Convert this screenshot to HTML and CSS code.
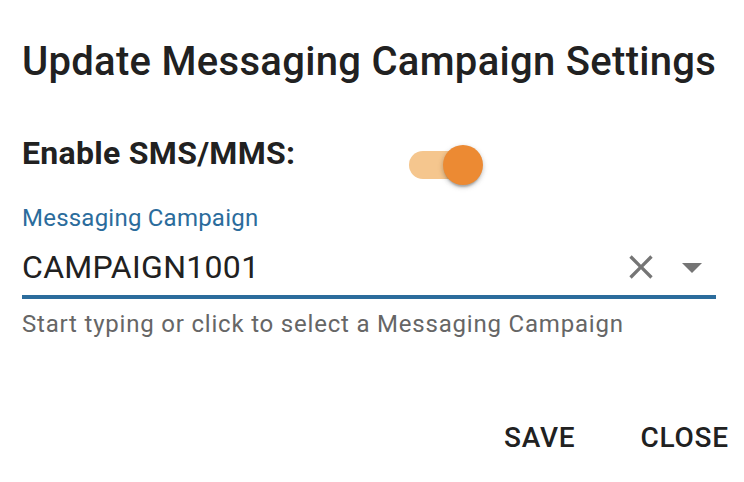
FILE: index.html
```html
<!DOCTYPE html>
<html lang="en">
<head>
<meta charset="UTF-8">
<title>Update Messaging Campaign Settings</title>
<link rel="stylesheet" href="styles.css">
</head>
<body>
<div class="dialog">
  <h2 class="dialog-title">Update Messaging Campaign Settings</h2>
  <div class="dialog-content">
    <div class="toggle-row">
      <span class="toggle-label">Enable SMS/MMS:</span>
      <span class="switch">
        <span class="switch-track"></span>
        <span class="switch-thumb"></span>
      </span>
    </div>
    <div class="field">
      <label class="field-label">Messaging Campaign</label>
      <div class="field-input">
        <span class="field-value">CAMPAIGN1001</span>
        <svg class="icon-clear" viewBox="0 0 24 24" width="40" height="40"><path d="M19 6.41 17.59 5 12 10.59 6.41 5 5 6.41 10.59 12 5 17.59 6.41 19 12 13.41 17.59 19 19 17.59 13.41 12z" fill="#757575"/></svg>
        <svg class="icon-arrow" viewBox="0 0 24 24" width="48" height="48"><path d="M7 10l5 5 5-5z" fill="#757575"/></svg>
      </div>
      <div class="field-helper">Start typing or click to select a Messaging Campaign</div>
    </div>
  </div>
  <div class="dialog-actions">
    <button class="btn">SAVE</button>
    <button class="btn">CLOSE</button>
  </div>
</div>
</body>
</html>
```
FILE: styles.css
```css
body { margin: 0; background: #fff; font-family: Roboto, "Liberation Sans", sans-serif; color: #212121; }
.dialog { width: 744px; height: 482px; display: flex; flex-direction: column; }
.dialog-title { margin: 0; padding: 30px 22px 0; font-size: 40px; font-weight: 500; line-height: 64px; letter-spacing: 0.0075em; }
.dialog-content { padding: 0 28px 0 22px; }
.toggle-row { display: flex; align-items: flex-start; margin-top: 39px; }
.toggle-label { width: 387px; font-size: 32px; font-weight: 700; line-height: 40px; letter-spacing: 0.00938em; }
.switch { position: relative; width: 74px; height: 40px; margin-top: 12px; }
.switch-track { position: absolute; left: 0; top: 6px; width: 68px; height: 28px; border-radius: 14px; background: #f5c68e; }
.switch-thumb { position: absolute; left: 34px; top: 0; width: 40px; height: 40px; border-radius: 50%; background: #ec8a33; box-shadow: 0 4px 2px -2px rgba(0,0,0,0.2), 0 2px 4px rgba(0,0,0,0.14), 0 2px 6px rgba(0,0,0,0.12); }
.field { margin-top: 19px; }
.field-label { display: block; font-size: 24px; color: #2b6c9c; line-height: 28px; letter-spacing: 0.00938em; }
.field-input { display: flex; align-items: center; height: 48px; margin-top: 11px; padding-bottom: 4px; border-bottom: 4px solid #2b6c9c; }
.field-value { flex: 1; font-size: 32px; line-height: 48px; letter-spacing: 0.00938em; }
.icon-clear { margin-right: 7px; }
.field-helper { margin-top: 11px; font-size: 24px; line-height: 28px; color: #666; letter-spacing: 0.0333em; }
.dialog-actions { display: flex; justify-content: flex-end; gap: 65px; margin-top: auto; padding: 0 15px 26px 0; }
.btn { background: none; border: none; padding: 0; font-family: inherit; font-size: 28px; font-weight: 500; line-height: 36px; letter-spacing: 0.02857em; color: #212121; cursor: pointer; }
```
